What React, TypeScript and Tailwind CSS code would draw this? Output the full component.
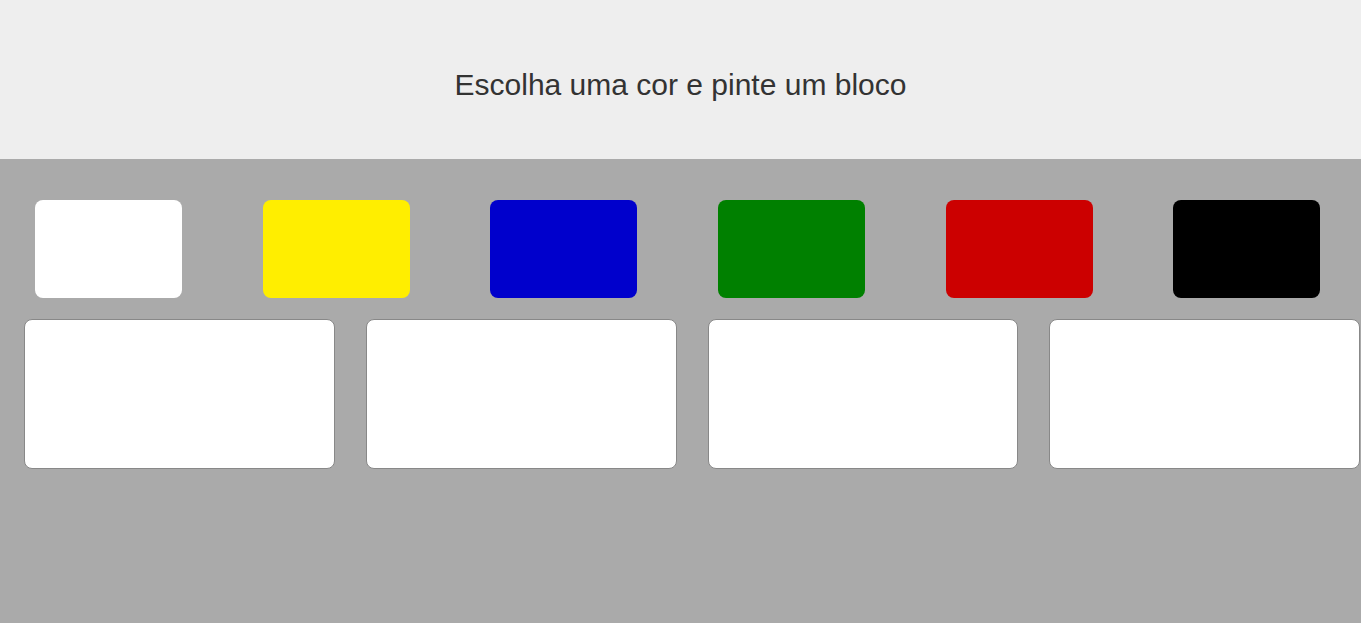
export default function App() {
  const colors = ["bg-[#ffffff]", "bg-[#ffee00]", "bg-[#0000cc]", "bg-[#008000]", "bg-[#cc0000]", "bg-[#000000]"];
  return (
    <div className="min-h-screen bg-[#aaaaaa]" style={{ fontFamily: '"Liberation Sans", Arial, sans-serif' }}>
      <div className="h-[159px] bg-[#eeeeee] pt-[68px] text-center">
        <h1 className="text-[30px] leading-[34px] text-[#333333] font-normal">Escolha uma cor e pinte um bloco</h1>
      </div>
      <div className="flex gap-[80.7px] pl-[35px] pt-[41px]">
        {colors.map((c, i) => (
          <div key={i} className={`w-[147px] h-[98px] rounded-[8px] ${c}`} />
        ))}
      </div>
      <div className="grid grid-cols-4 gap-[31px] pl-[24px] pr-[1px] pt-[21px]">
        {[0, 1, 2, 3].map((i) => (
          <div key={i} className="h-[150px] rounded-[8px] border border-[#888888] bg-white" />
        ))}
      </div>
    </div>
  );
}
